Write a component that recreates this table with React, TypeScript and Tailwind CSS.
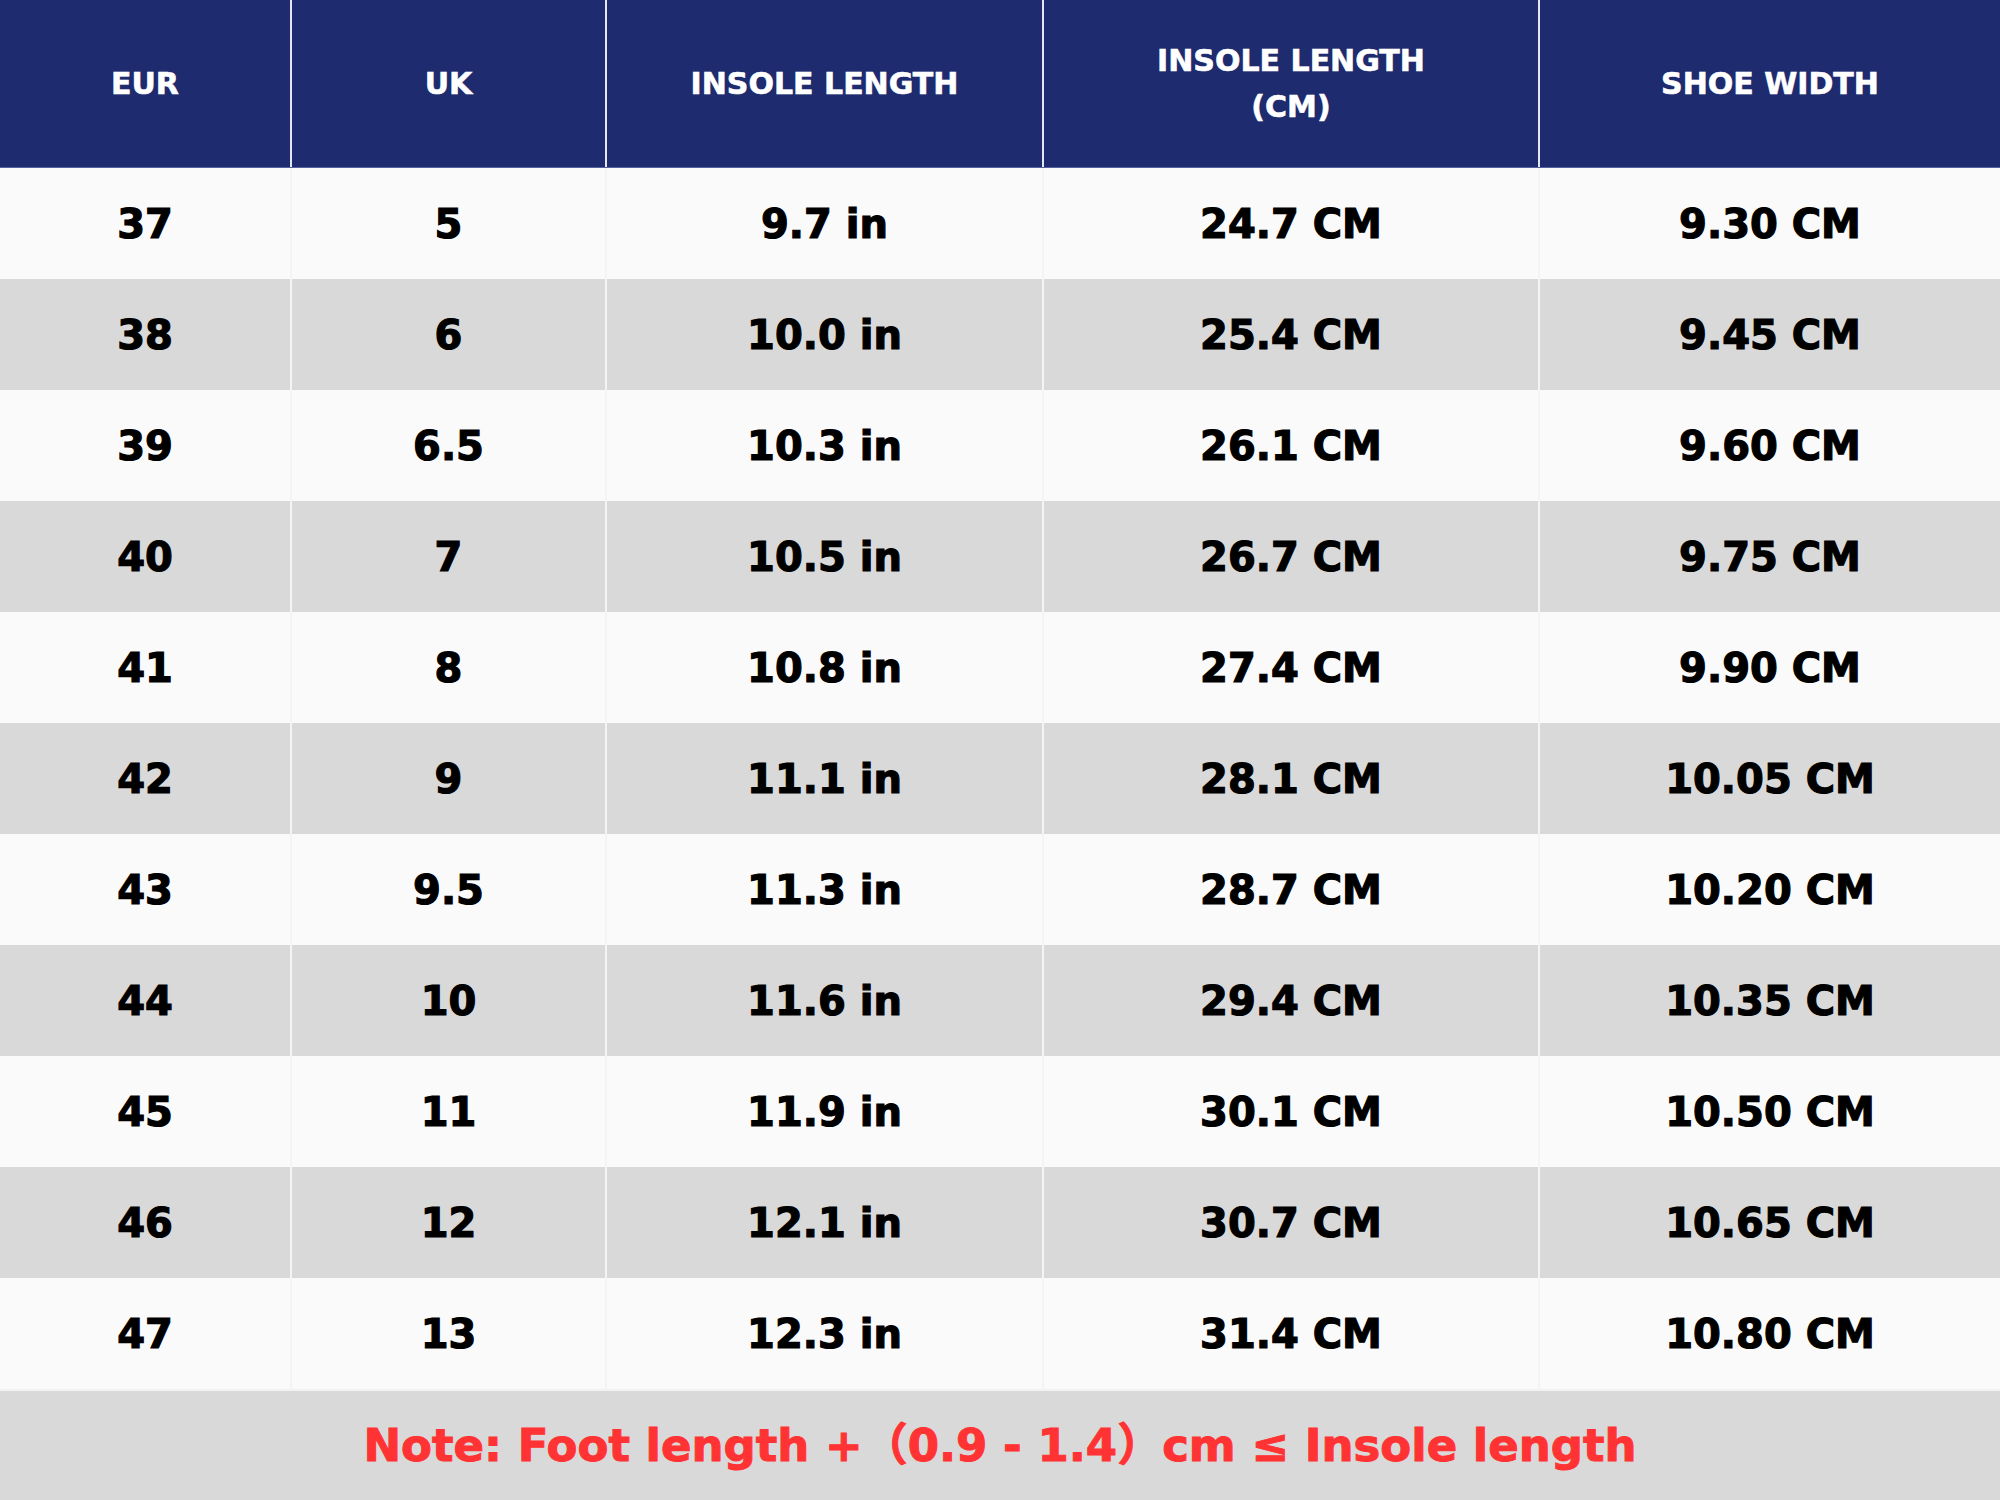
const headers = ["EUR", "UK", "INSOLE LENGTH", "INSOLE LENGTH\n(CM)", "SHOE WIDTH"];

const rows = [
  ["37", "5", "9.7 in", "24.7 CM", "9.30 CM"],
  ["38", "6", "10.0 in", "25.4 CM", "9.45 CM"],
  ["39", "6.5", "10.3 in", "26.1 CM", "9.60 CM"],
  ["40", "7", "10.5 in", "26.7 CM", "9.75 CM"],
  ["41", "8", "10.8 in", "27.4 CM", "9.90 CM"],
  ["42", "9", "11.1 in", "28.1 CM", "10.05 CM"],
  ["43", "9.5", "11.3 in", "28.7 CM", "10.20 CM"],
  ["44", "10", "11.6 in", "29.4 CM", "10.35 CM"],
  ["45", "11", "11.9 in", "30.1 CM", "10.50 CM"],
  ["46", "12", "12.1 in", "30.7 CM", "10.65 CM"],
  ["47", "13", "12.3 in", "31.4 CM", "10.80 CM"],
];

const cols = "grid grid-cols-[290px_315px_437px_496px_462px]";

export default function App() {
  return (
    <div className="w-[2000px] h-[1500px] flex flex-col bg-[#fafafa] font-['DejaVu_Sans',sans-serif] font-bold">
      <div className={`${cols} h-[168px] bg-[#1e2b6e] border-b border-[#53629f]`}>
        {headers.map((h, i) => (
          <div
            key={h}
            className={`flex items-center justify-center text-center whitespace-pre-line text-[30px] leading-[46px] text-white [-webkit-text-stroke:0.6px_white] ${
              i > 0 ? "border-l-2 border-[#e4e6ee]" : ""
            }`}
          >
            {h}
          </div>
        ))}
      </div>
      {rows.map((r, ri) => (
        <div key={r[0]} className={`${cols} h-[111px] ${ri % 2 ? "bg-[#d9d9d9]" : "bg-[#fafafa]"}`}>
          {r.map((c, i) => (
            <div
              key={i}
              className={`flex items-center justify-center text-[40px] text-black [-webkit-text-stroke:1.2px_black] ${
                i > 0 ? "border-l-2 border-[#f4f4f4]" : ""
              }`}
            >
              {c}
            </div>
          ))}
        </div>
      ))}
      <div className="flex-1 flex items-center justify-center bg-[#d9d9d9] border-t-2 border-[#f2f2f2]">
        <span className="text-[45px] text-[#ff3333] [-webkit-text-stroke:1px_#ff3333] font-['DejaVu_Sans','Noto_Sans_CJK_SC',sans-serif]">
          Note: Foot length +（0.9 - 1.4）cm ≤ Insole length
        </span>
      </div>
    </div>
  );
}
